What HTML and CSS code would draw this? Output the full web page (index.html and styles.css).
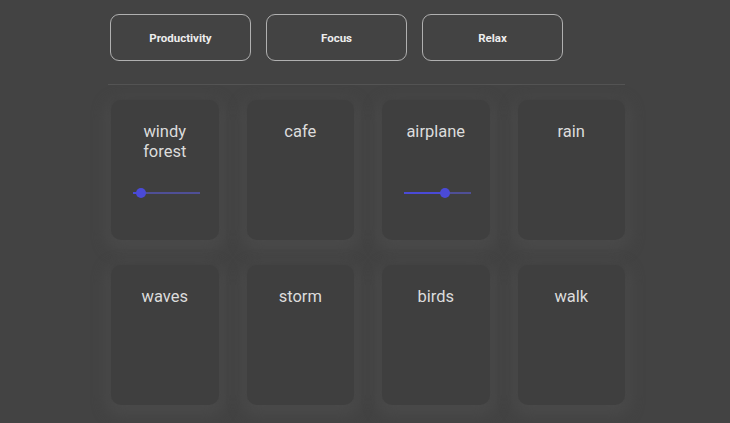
FILE: index.html
```html
<!DOCTYPE html>
<html>
<head>
<meta charset="utf-8">
<link rel="stylesheet" href="styles.css">
</head>
<body>
<div class="page">
  <div class="modes">
    <button class="mode">Productivity</button>
    <button class="mode">Focus</button>
    <button class="mode">Relax</button>
  </div>
  <div class="divider"></div>
  <div class="grid">
    <div class="card">
      <div class="label">windy<br>forest</div>
      <div class="slider">
        <div class="fill" style="width:12%"></div>
        <div class="thumb" style="left:12%"></div>
      </div>
    </div>
    <div class="card"><div class="label">cafe</div></div>
    <div class="card">
      <div class="label">airplane</div>
      <div class="slider">
        <div class="fill" style="width:61%"></div>
        <div class="thumb" style="left:61%"></div>
      </div>
    </div>
    <div class="card"><div class="label">rain</div></div>
    <div class="card"><div class="label">waves</div></div>
    <div class="card"><div class="label">storm</div></div>
    <div class="card"><div class="label">birds</div></div>
    <div class="card"><div class="label">walk</div></div>
  </div>
</div>
</body>
</html>
```
FILE: styles.css
```css
html, body {
  margin: 0;
  padding: 0;
  background: #434343;
  height: 100%;
  overflow: hidden;
}
body {
  font-family: Roboto, "Liberation Sans", sans-serif;
}
.page {
  width: 517px;
  margin-left: 108px;
  padding-top: 14px;
}
.modes {
  display: flex;
  gap: 15px;
  padding-left: 2px;
}
.mode {
  width: 141px;
  height: 47px;
  background: transparent;
  border: 1.5px solid #b0b0b0;
  border-radius: 9px;
  color: #ededed;
  font-family: Roboto, "Liberation Sans", sans-serif;
  font-weight: 700;
  font-size: 11.5px;
  padding: 0;
}
.divider {
  margin-top: 23px;
  height: 1px;
  background: #545454;
}
.grid {
  margin-top: 15px;
  margin-left: 3px;
  display: grid;
  grid-template-columns: repeat(4, 107.5px);
  grid-template-rows: 140px 140px;
  column-gap: 28px;
  row-gap: 25px;
}
.card {
  background: #3f3f3f;
  border-radius: 10px;
  box-shadow: 0 5px 14px 5px #4a4a4a, 0 0 3px 1px #3c3c3c;
  padding-top: 22px;
  box-sizing: border-box;
  display: flex;
  flex-direction: column;
  align-items: center;
}
.label {
  color: #dcdcdc;
  font-size: 16.5px;
  line-height: 20px;
  text-align: center;
}
.slider {
  position: relative;
  width: 67px;
  height: 2px;
  background: #4f4f96;
  margin-top: auto;
  margin-bottom: 46px;
  margin-left: 3px;
}
.fill {
  height: 2px;
  background: #4a4ad6;
}
.thumb {
  position: absolute;
  top: -4px;
  width: 10px;
  height: 10px;
  margin-left: -5px;
  border-radius: 50%;
  background: #4a4ad8;
}
```
